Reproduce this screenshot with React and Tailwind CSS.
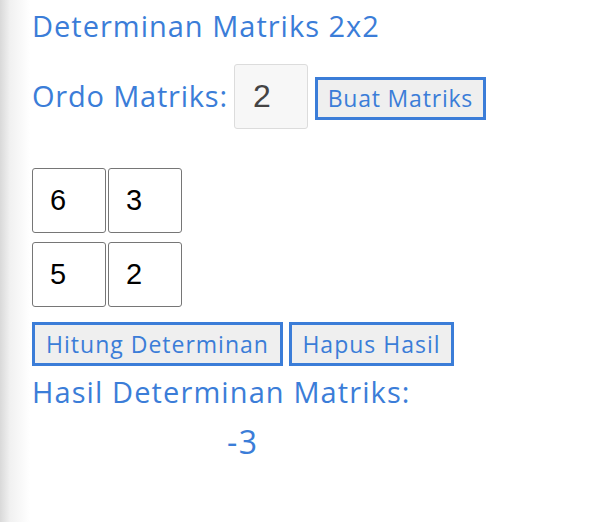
import React, { useState } from 'react';

const blue = 'text-[#3b7dd8]';

export default function App() {
  const [ordo, setOrdo] = useState('2');
  const [cells, setCells] = useState([['6', '3'], ['5', '2']]);

  return (
    <div className="min-h-screen w-full bg-[linear-gradient(90deg,#d9d9d9_0px,#f1f1f1_10px,#ffffff_30px)] pl-8 font-['Open_Sans',sans-serif]">
      {/* Title */}
      <h1 className={`${blue} pt-[9px] text-[29px] leading-[34px] tracking-[1px]`}>Determinan Matriks 2x2</h1>

      {/* Ordo row */}
      <div className="mt-[21px] flex items-baseline">
        <span className={`${blue} text-[29px] tracking-[0.8px]`}>Ordo Matriks:</span>
        <input
          value={ordo}
          onChange={(e) => setOrdo(e.target.value)}
          className="ml-[6px] h-[65px] w-[74px] rounded-[3px] border border-[#dcdcdc] bg-[#f7f7f7] pl-[18px] font-['Liberation_Sans',sans-serif] text-[32px] text-[#444]"
        />
        <button className={`${blue} ml-[7px] h-[43px] w-[171px] border-[3px] border-[#3b7dd8] bg-[#efefef] text-[23px] tracking-[0.8px]`}>
          Buat Matriks
        </button>
      </div>

      {/* Matrix */}
      <div className="mt-[39px] flex flex-col gap-[9px]">
        {cells.map((row, i) => (
          <div key={i} className="flex gap-[2px]">
            {row.map((v, j) => (
              <input
                key={j}
                value={v}
                onChange={(e) => {
                  const next = cells.map((r) => [...r]);
                  next[i][j] = e.target.value;
                  setCells(next);
                }}
                className="h-[65px] w-[74px] rounded-[3px] border border-[#767676] bg-white pl-[17px] font-['Liberation_Sans',sans-serif] text-[29px] text-black"
              />
            ))}
          </div>
        ))}
      </div>

      {/* Actions */}
      <div className="mt-[15px] flex gap-[6px]">
        <button className={`${blue} h-[44px] w-[251px] border-[3px] border-[#3b7dd8] bg-[#efefef] text-[23px] tracking-[1px]`}>
          Hitung Determinan
        </button>
        <button className={`${blue} h-[44px] w-[165px] border-[3px] border-[#3b7dd8] bg-[#efefef] text-[23px] tracking-[1px]`}>
          Hapus Hasil
        </button>
      </div>

      <h2 className={`${blue} mt-[9px] text-[29px] leading-[34px] tracking-[1.1px]`}>Hasil Determinan Matriks:</h2>
      <p className={`${blue} mt-[16px] pl-[195px] text-[32px] leading-[34px] tracking-[1.5px]`}>-3</p>
    </div>
  );
}
